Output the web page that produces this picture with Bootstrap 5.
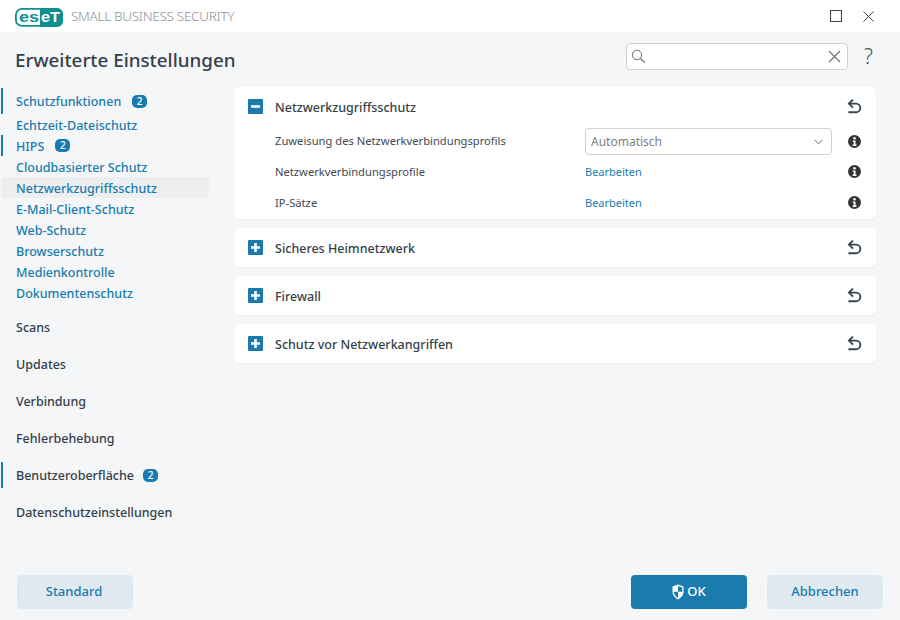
<!DOCTYPE html>
<html lang="de">
<head>
<meta charset="utf-8">
<title>ESET Small Business Security</title>
<link rel="stylesheet" href="https://cdn.jsdelivr.net/npm/bootstrap@5.3.0/dist/css/bootstrap.min.css">
<style>
html,body{height:620px;overflow:hidden}
body{font-family:"Noto Sans",sans-serif;font-size:12px;background:#f4f6f8;color:#353f49}
.app-frame{height:620px}
.title-strip{height:32px;background:#fff;padding-left:15px}
.brand-name{font-size:13.5px;color:#8f9296;font-weight:300;margin-left:8px;letter-spacing:-.29px;padding-top:1px}
.win-btns{padding-right:26px;gap:21px}
.head-strip{height:55px;padding:0 24px 0 15px}
.page-title{font-size:18.8px;font-weight:500;margin:1px 0 0;color:#353f49;line-height:27px}
.search-block{margin-bottom:6px}
.search-wrap{width:222px;height:27px;background:#fff;border:1px solid #cfd1d3;border-radius:4px;padding:0 6px 0 4px}
.help-mark{font-size:21px;width:12px;margin-left:16px;color:#44505b;line-height:27px;font-weight:300}
.body-strip{flex:1;min-height:0}
.side-col{width:234px;padding-top:1px;flex:none}
.side-mark{width:2px;background:#1a7cae;flex:none}
.side-group{padding-left:1px}
.side-top{font-size:12.5px;font-weight:500;height:26px;color:#1a7cae}
.side-top .side-label{padding-top:2px}
.side-sub{font-size:12.5px;font-weight:500;height:21px;color:#1a7cae;padding:3px 0 0 15px;width:208px;border-radius:4px}
.side-sub .side-label{padding-top:3px}
.side-sub.current{background:#edeef0}
.side-plain{font-size:12.5px;font-weight:500;height:37px;color:#353f49;padding-left:16px}
.side-plain.with-mark{padding-left:1px}
.plain-first{margin-top:7px}
.mark-tall{height:26px}
.mark-mid{height:21px}
.mark-raised{margin-bottom:4px}
.side-label{padding-left:13px}
.count-pill{background:#1a7cae;color:#fff;font-size:10px;font-weight:500;line-height:13px;height:13px;width:15px;border-radius:5px;text-align:center;margin-left:11px}
.with-mark .count-pill{margin:0 0 2px 9px}
.main-col{width:642px;flex:none;gap:9px}
.pane{background:#fff;border-radius:5px;box-shadow:0 1px 2px rgba(30,40,50,.05)}
.pane-open{padding-bottom:1px}
.pane-head{height:39px;padding:0 14px}
.pane-title{font-size:12.5px;font-weight:500;margin-left:12px;flex:1;color:#353f49;padding-top:4px}
.pane-line{padding:0 14px 0 41px;font-size:11.2px;height:31px;color:#3f4851}
.pane-line.line-first{height:30px}
.pane-line .line-label{width:310px;flex:none;padding-top:1px}
.pane-line .line-value{width:247px;flex:none;padding-top:1px}
.pane-line .line-info{margin-left:16px;line-height:0}
.value-link{color:#1a7cae;font-size:11px;text-decoration:none}
.pane-line .combo-box{height:27px;border:1px solid #cfd1d3;border-radius:4px;padding:1px 8px 0 5px;color:#7b8188;font-size:12px;background:#fff}
.foot-strip{height:45px;padding:0 17px 11px;flex:none}
.foot-btn{width:116px;height:34px;font-size:13px;font-weight:500;border:0;border-radius:4px;padding:0}
.foot-alt,.foot-alt:hover{background:#dfe9f0;color:#1a7cae}
.foot-nudge{padding-right:2px}
.foot-main,.foot-main:hover{background:#1a7cae;color:#fff;margin-right:20px;gap:3px}
</style>
</head>
<body>
<div class="app-frame d-flex flex-column">
  <div class="title-strip d-flex align-items-center justify-content-between">
    <div class="d-flex align-items-center">
      <svg width="48" height="22" viewBox="0 0 48 22" role="img" aria-label="ESET">
        <rect x=".9" y="3.900" width="46.200" height="17" rx="6" fill="#fff" stroke="#0f8f8f" stroke-width="1.800"/>
        <path d="M25 3h17a6 6 0 0 1 6 6v7a6 6 0 0 1-6 6H25z" fill="#0f8f8f"/>
        <text x="4" y="17.200" textLength="20" lengthAdjust="spacingAndGlyphs" font-family="Liberation Sans,sans-serif" font-weight="700" font-size="15" fill="#0f8f8f">es</text>
        <text x="26" y="17.200" textLength="19" lengthAdjust="spacingAndGlyphs" font-family="Liberation Sans,sans-serif" font-weight="700" font-size="14" fill="#fff">eT</text>
      </svg>
      <span class="brand-name">SMALL BUSINESS SECURITY</span>
    </div>
    <div class="d-flex align-items-center win-btns">
      <svg width="12" height="12" viewBox="0 0 12 12"><rect x=".5" y=".5" width="11" height="11" fill="none" stroke="#444" stroke-width="1"/></svg>
      <svg width="11" height="11" viewBox="0 0 11 11"><path d="M.5 .5l10 10M10.500 .5L.5 10.500" stroke="#444" stroke-width="1" fill="none"/></svg>
    </div>
  </div>
  <div class="head-strip d-flex align-items-center justify-content-between">
    <h1 class="page-title">Erweiterte Einstellungen</h1>
    <div class="search-block d-flex align-items-center">
      <div class="search-wrap d-flex align-items-center justify-content-between">
        <svg width="15" height="15" viewBox="0 0 15 15"><circle cx="6" cy="6" r="4.700" fill="none" stroke="#6a6f75" stroke-width="1"/><path d="M9.500 9.500l4.200 4.200" stroke="#6a6f75" stroke-width="1.200"/></svg>
        <svg width="13" height="13" viewBox="0 0 13 13"><path d="M1 1l11 11M12 1L1 12" stroke="#6a6f75" stroke-width="1.100" fill="none"/></svg>
      </div>
      <span class="help-mark">?</span>
    </div>
  </div>
  <div class="body-strip d-flex">
    <nav class="side-col">
      <div class="side-group d-flex align-items-center side-top">
        <span class="side-mark mark-tall"></span><span class="side-label">Schutzfunktionen</span><span class="count-pill">2</span>
      </div>
      <div class="side-group">
        <div class="side-sub d-flex align-items-center">Echtzeit-Dateischutz</div>
        <div class="d-flex align-items-center side-sub p-0"><span class="side-mark mark-mid"></span><span class="side-label">HIPS</span><span class="count-pill">2</span></div>
        <div class="side-sub d-flex align-items-center">Cloudbasierter Schutz</div>
        <div class="side-sub current d-flex align-items-center">Netzwerkzugriffsschutz</div>
        <div class="side-sub d-flex align-items-center">E-Mail-Client-Schutz</div>
        <div class="side-sub d-flex align-items-center">Web-Schutz</div>
        <div class="side-sub d-flex align-items-center">Browserschutz</div>
        <div class="side-sub d-flex align-items-center">Medienkontrolle</div>
        <div class="side-sub d-flex align-items-center">Dokumentenschutz</div>
      </div>
      <div class="side-plain plain-first d-flex align-items-center">Scans</div>
      <div class="side-plain d-flex align-items-center">Updates</div>
      <div class="side-plain d-flex align-items-center">Verbindung</div>
      <div class="side-plain d-flex align-items-center">Fehlerbehebung</div>
      <div class="side-plain with-mark d-flex align-items-center"><span class="side-mark mark-tall mark-raised"></span><span class="side-label">Benutzeroberfläche</span><span class="count-pill">2</span></div>
      <div class="side-plain d-flex align-items-center">Datenschutzeinstellungen</div>
    </nav>
    <main class="main-col d-flex flex-column">
      <section class="pane pane-open">
        <div class="pane-head d-flex align-items-center">
          <svg width="15" height="15" viewBox="0 0 15 15"><rect width="15" height="15" rx="1" fill="#1a7cae"/><rect x="3" y="6.200" width="9" height="2.600" fill="#fff"/></svg>
          <span class="pane-title">Netzwerkzugriffsschutz</span>
          <svg width="15" height="16" viewBox="0 0 15 16"><path d="M6 .6L1.900 4.600 6 8.600M2.200 4.600h6.800a4.300 4.300 0 0 1 0 8.600H1.400" fill="none" stroke="#36454f" stroke-width="1.900"/></svg>
        </div>
        <div class="pane-line line-first d-flex align-items-center">
          <span class="line-label">Zuweisung des Netzwerkverbindungsprofils</span>
          <div class="line-value combo-box d-flex align-items-center justify-content-between"><span>Automatisch</span><svg width="9" height="6" viewBox="0 0 9 6"><path d="M.5 .8L4.500 4.800 8.500 .8" fill="none" stroke="#6a6f75" stroke-width="1"/></svg></div>
          <span class="line-info"><svg width="13" height="13" viewBox="0 0 13 13"><circle cx="6.500" cy="6.500" r="6.500" fill="#333"/><circle cx="6.500" cy="3.300" r="1.300" fill="#fff"/><path d="M4.800 5.400h2.700v4.200h1v1.300H4.600V9.600h1.100V6.700h-.9z" fill="#fff"/></svg></span>
        </div>
        <div class="pane-line d-flex align-items-center">
          <span class="line-label">Netzwerkverbindungsprofile</span>
          <span class="line-value"><a class="value-link" href="#">Bearbeiten</a></span>
          <span class="line-info"><svg width="13" height="13" viewBox="0 0 13 13"><circle cx="6.500" cy="6.500" r="6.500" fill="#333"/><circle cx="6.500" cy="3.300" r="1.300" fill="#fff"/><path d="M4.800 5.400h2.700v4.200h1v1.300H4.600V9.600h1.100V6.700h-.9z" fill="#fff"/></svg></span>
        </div>
        <div class="pane-line d-flex align-items-center">
          <span class="line-label">IP-Sätze</span>
          <span class="line-value"><a class="value-link" href="#">Bearbeiten</a></span>
          <span class="line-info"><svg width="13" height="13" viewBox="0 0 13 13"><circle cx="6.500" cy="6.500" r="6.500" fill="#333"/><circle cx="6.500" cy="3.300" r="1.300" fill="#fff"/><path d="M4.800 5.400h2.700v4.200h1v1.300H4.600V9.600h1.100V6.700h-.9z" fill="#fff"/></svg></span>
        </div>
      </section>
      <section class="pane">
        <div class="pane-head d-flex align-items-center">
          <svg width="15" height="15" viewBox="0 0 15 15"><rect width="15" height="15" rx="1" fill="#1a7cae"/><path d="M3 6.200h3.200V3h2.600v3.200H12v2.600H8.800V12H6.200V8.800H3z" fill="#fff"/></svg>
          <span class="pane-title">Sicheres Heimnetzwerk</span>
          <svg width="15" height="16" viewBox="0 0 15 16"><path d="M6 .6L1.900 4.600 6 8.600M2.200 4.600h6.800a4.300 4.300 0 0 1 0 8.600H1.400" fill="none" stroke="#36454f" stroke-width="1.900"/></svg>
        </div>
      </section>
      <section class="pane">
        <div class="pane-head d-flex align-items-center">
          <svg width="15" height="15" viewBox="0 0 15 15"><rect width="15" height="15" rx="1" fill="#1a7cae"/><path d="M3 6.200h3.200V3h2.600v3.200H12v2.600H8.800V12H6.200V8.800H3z" fill="#fff"/></svg>
          <span class="pane-title">Firewall</span>
          <svg width="15" height="16" viewBox="0 0 15 16"><path d="M6 .6L1.900 4.600 6 8.600M2.200 4.600h6.800a4.300 4.300 0 0 1 0 8.600H1.400" fill="none" stroke="#36454f" stroke-width="1.900"/></svg>
        </div>
      </section>
      <section class="pane">
        <div class="pane-head d-flex align-items-center">
          <svg width="15" height="15" viewBox="0 0 15 15"><rect width="15" height="15" rx="1" fill="#1a7cae"/><path d="M3 6.200h3.200V3h2.600v3.200H12v2.600H8.800V12H6.200V8.800H3z" fill="#fff"/></svg>
          <span class="pane-title">Schutz vor Netzwerkangriffen</span>
          <svg width="15" height="16" viewBox="0 0 15 16"><path d="M6 .6L1.900 4.600 6 8.600M2.200 4.600h6.800a4.300 4.300 0 0 1 0 8.600H1.400" fill="none" stroke="#36454f" stroke-width="1.900"/></svg>
        </div>
      </section>
    </main>
  </div>
  <div class="foot-strip d-flex align-items-start justify-content-between">
    <button class="btn foot-btn foot-alt foot-nudge" type="button">Standard</button>
    <div class="d-flex">
      <button class="btn foot-btn foot-main d-flex align-items-center justify-content-center" type="button">
        <svg width="12" height="16" viewBox="0 0 12 16"><path d="M6 .5l5.500 2v5.200c0 3.500-2.400 6.100-5.500 7.800C2.900 13.800 .5 11.200 .5 7.700V2.500z" fill="#fff"/><path d="M6 2l4.200 1.500v4.200H6zM6 7.700v6.200C3.600 12.400 1.800 10.300 1.800 7.700z" fill="#1a7cae"/></svg>OK
      </button>
      <button class="btn foot-btn foot-alt" type="button">Abbrechen</button>
    </div>
  </div>
</div>
<script src="https://cdn.jsdelivr.net/npm/bootstrap@5.3.0/dist/js/bootstrap.bundle.min.js"></script>
</body>
</html>
